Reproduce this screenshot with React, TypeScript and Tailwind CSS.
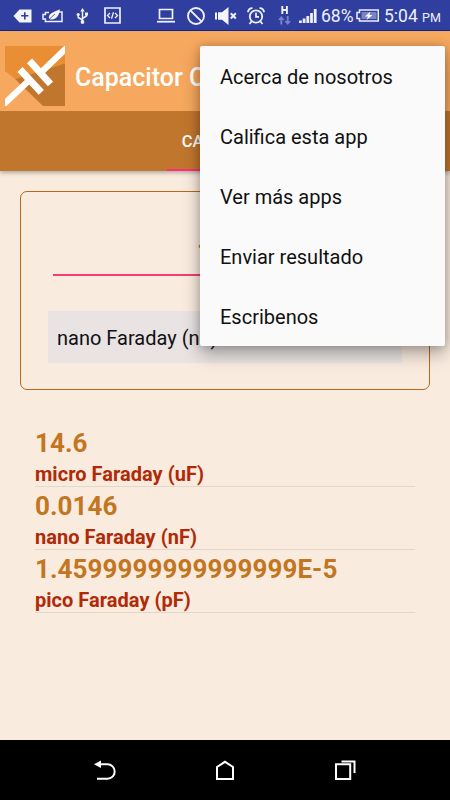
import React from "react";

const menuItems = [
  "Acerca de nosotros",
  "Califica esta app",
  "Ver más apps",
  "Enviar resultado",
  "Escribenos",
];

const results = [
  { value: "14.6", unit: "micro Faraday (uF)" },
  { value: "0.0146", unit: "nano Faraday (nF)" },
  { value: "1.4599999999999999E-5", unit: "pico Faraday (pF)" },
];

const StatusBar: React.FC = () => (
  <div className="flex h-[31px] shrink-0 items-center border-b border-[#0c2a8e] bg-[#303f9f] pt-[1px] pl-[13px] text-[#eef0fa]">
    {/* tag with plus */}
    <svg width="19" height="14" viewBox="0 0 19 14" className="shrink-0">
      <path d="M6.5 .5h12v13h-12L.5 7z" fill="#f4f5fc" />
      <path d="M11.800 3.200v7.200M8.200 6.800h7.200" stroke="#303f9f" strokeWidth="1.600" />
    </svg>
    {/* power saver */}
    <svg width="22" height="14" viewBox="0 0 22 14" className="ml-[10px] shrink-0" fill="none">
      <path d="M7 3.500H3.400v2H1v4.500h2.400v2.500H20V3h-3" stroke="currentColor" strokeWidth="1.500" />
      <path d="M7 9.800C6 5 10 3.500 17.800.2c-.3 6-3.600 10.800-9.300 10.200z" fill="#f4f5fc" />
      <path d="M5.500 11.800 13 5" stroke="#303f9f" strokeWidth=".8" />
    </svg>
    {/* usb */}
    <svg width="13" height="16" viewBox="0 0 13 16" className="ml-[12px] shrink-0" fill="none">
      <path d="M6.500 2v12M6.500 12 2.200 9.500V6M6.500 10.500l4-2.500V5.500" stroke="currentColor" strokeWidth="1.500" />
      <path d="m6.500 0 2.200 3.500H4.300z" fill="currentColor" />
      <circle cx="6.500" cy="14" r="1.900" fill="currentColor" />
      <circle cx="2.200" cy="6.500" r="1.600" fill="currentColor" />
      <path d="M9 4.500h3v3H9z" fill="currentColor" />
    </svg>
    {/* developer mode */}
    <svg width="17" height="17" viewBox="0 0 17 17" className="ml-[15px] shrink-0" fill="none" stroke="currentColor">
      <path d="M1 1h15v15H1z" strokeWidth="1.700" />
      <path d="M6 6 3.500 8.500 6 11M11 6l2.500 2.500L11 11M9.500 5.300l-2 6.400" strokeWidth="1.300" />
    </svg>
    {/* laptop */}
    <svg width="18" height="15" viewBox="0 0 18 15" className="ml-[36px] shrink-0" fill="none" stroke="currentColor">
      <path d="M2.500 1.500h13v9h-13z" strokeWidth="1.700" />
      <path d="M0 13.700h18" strokeWidth="1.800" />
    </svg>
    {/* blocked */}
    <svg width="18" height="18" viewBox="0 0 18 18" className="ml-[12px] shrink-0" fill="none" stroke="currentColor" strokeWidth="1.900">
      <circle cx="9" cy="9" r="8" />
      <path d="m3.400 3.400 11.200 11.200" />
    </svg>
    {/* muted speaker */}
    <svg width="22" height="18" viewBox="0 0 22 18" className="ml-[10px] shrink-0">
      <path d="M0 5.500h2v7H0zM3 5.200h4L13.500 0v18L7 12.800H3z" fill="#f4f5fc" />
      <path d="m15.800 6.300 5 5.200M20.800 6.300l-5 5.200" stroke="currentColor" strokeWidth="2" />
    </svg>
    {/* alarm */}
    <svg width="18" height="18" viewBox="0 0 18 18" className="ml-[10px] shrink-0" fill="none" stroke="currentColor" strokeWidth="1.800">
      <circle cx="9" cy="9.500" r="6.200" />
      <path d="M9 5.800v4h3M4.500 14.500 2.500 17M13.500 14.500l2 2.500M1 5.200C1 2.800 3 1 5.500 1.200M17 5.200c0-2.400-2-4.200-4.500-4" />
    </svg>
    {/* HSPA data */}
    <svg width="13" height="20" viewBox="0 0 13 20" className="ml-[13px] shrink-0" fill="none">
      <path d="M4.300 0v8M8.900 0v8M4.300 4h4.600" stroke="currentColor" strokeWidth="1.900" />
      <path d="M3.300 18.500v-5M9.700 10v6" stroke="#7984c4" strokeWidth="1.900" />
      <path d="m0 14 3.300-4 3.300 4zM6.400 15l3.300 4 3.300-4z" fill="#7984c4" />
    </svg>
    {/* signal */}
    <svg width="18" height="14" viewBox="0 0 18 14" className="ml-[8px] shrink-0" fill="currentColor">
      <path d="M0 11.500h2.800V14H0zM3.700 9.500h2.800V14H3.700zM7.400 7h2.800v7H7.400zM11.100 4h2.800v10h-2.800zM14.800 0h2.800v14h-2.800z" />
    </svg>
    <span className="ml-[4px] w-[33px] shrink-0 pt-[3px] text-[17.500px] leading-none whitespace-nowrap">68%</span>
    {/* battery */}
    <svg width="23" height="13" viewBox="0 0 23 13" className="ml-[2px] shrink-0">
      <path d="M3.500 1h18.800v11H3.500V9.500H1v-6h2.500z" fill="none" stroke="currentColor" strokeWidth="1.500" />
      <path d="M5.500 3h15v7h-15z" fill="#7984c4" />
      <path d="m14.500 2.500-5.500 5h3L10.500 11l6-5h-3.200z" fill="#fff" />
    </svg>
    <span className="ml-[5px] shrink-0 pt-[3px] text-[17.500px] leading-none whitespace-nowrap">
      5:04 <span className="text-[12.500px]">PM</span>
    </span>
  </div>
);

const AppLogo: React.FC = () => (
  <svg width="60" height="60" viewBox="0 0 60 60" className="shrink-0">
    <path d="M0 0h60v18L10 33 0 25z" fill="#e98e35" />
    <path d="M60 17.500V60H38L10 33z" fill="#c1762d" />
    <path d="M62 1.500 36 26.500M-2 59 25 33.500" stroke="#fff" strokeWidth="6.300" />
    <path d="M24.500 14.800 45.500 38M15 23.500l21.300 22.800" stroke="#fff" strokeWidth="7" />
  </svg>
);

const OverflowMenu: React.FC = () => (
  <div className="absolute top-[46px] left-[200px] z-10 h-[300px] w-[245px] rounded-[2px] bg-[#fafafa] shadow-[0_8px_18px_rgba(0,0,0,0.3),0_0_10px_rgba(0,0,0,0.2)]">
    {menuItems.map((item) => (
      <div key={item} className="flex h-[60px] items-center px-5 pt-[2px] text-[20px] text-[#111]">
        {item}
      </div>
    ))}
  </div>
);

const NavBar: React.FC = () => (
  <div className="flex h-[60px] shrink-0 items-center justify-between bg-black px-[94px] text-white">
    <svg width="22" height="21" viewBox="0 0 22 21" fill="none">
      <path d="M5 4.300h8.500a7.200 7.200 0 0 1 0 14.400H3" stroke="currentColor" strokeWidth="2" />
      <path d="M0 4.300 7 .5v7.600z" fill="currentColor" />
    </svg>
    <svg width="20" height="21" viewBox="0 0 20 21" fill="none">
      <path d="M2 19V7l8-5.200L18 7v12z" stroke="currentColor" strokeWidth="2" />
    </svg>
    <svg width="22" height="21" viewBox="0 0 22 21" fill="none">
      <path d="M2 4.300h14.200V19H2z" stroke="currentColor" strokeWidth="2" />
      <path d="M7.500 1.500h13V13" stroke="currentColor" strokeWidth="2" />
    </svg>
  </div>
);

export default function App() {
  return (
    <div className="relative flex h-[800px] w-[450px] flex-col overflow-hidden bg-[#f9ebde] font-['Roboto',sans-serif]">
      <StatusBar />

      <header className="shrink-0 shadow-[0_2px_4px_rgba(0,0,0,0.28)]">
        <div className="flex h-20 items-center gap-[10px] bg-[#f6a85e] pt-[15px] pb-[5px] pl-[5px]">
          <AppLogo />
          <h1 className="pt-[3px] text-[25px] font-medium whitespace-nowrap text-white">
            Capacitor Calc
          </h1>
        </div>
        <div className="flex h-[60px] justify-center bg-[#c1762d]">
          <div className="flex w-[116px] items-center justify-center border-b-2 border-[#ff2d78] pt-[5px] pl-[2px] text-[16.500px] font-medium text-white">
            CAPACITOR
          </div>
        </div>
      </header>

      <main className="flex-1 px-5 pt-5">
        <section className="flex h-[199px] flex-col rounded-[7px] border border-[#b9681c] px-[27px]">
          <div className="mx-[5px] mt-[39px] h-[45px] border-b-2 border-[#f73a78] pt-[2px] pr-[2px] text-center text-[27px] font-bold text-[#c1751f]">
            14.6
          </div>
          <div className="mt-[35px] flex h-[52px] items-center bg-[#e9e3e3] px-[9px] pt-[2px] text-[20px] text-[#111]">
            nano Faraday (nF)
          </div>
        </section>

        <ul className="mx-[15px] mt-[34px]">
          {results.map((row) => (
            <li key={row.unit} className="h-[63px] border-b border-[#e4d7cb]">
              <p className="pt-[3px] text-[26px] leading-[32px] font-bold tracking-[0.07px] text-[#c3751f]">{row.value}</p>
              <p className="text-[20px] leading-[30px] font-bold tracking-[0.03px] text-[#b02a08]">{row.unit}</p>
            </li>
          ))}
        </ul>
      </main>

      <NavBar />
      <OverflowMenu />
    </div>
  );
}
